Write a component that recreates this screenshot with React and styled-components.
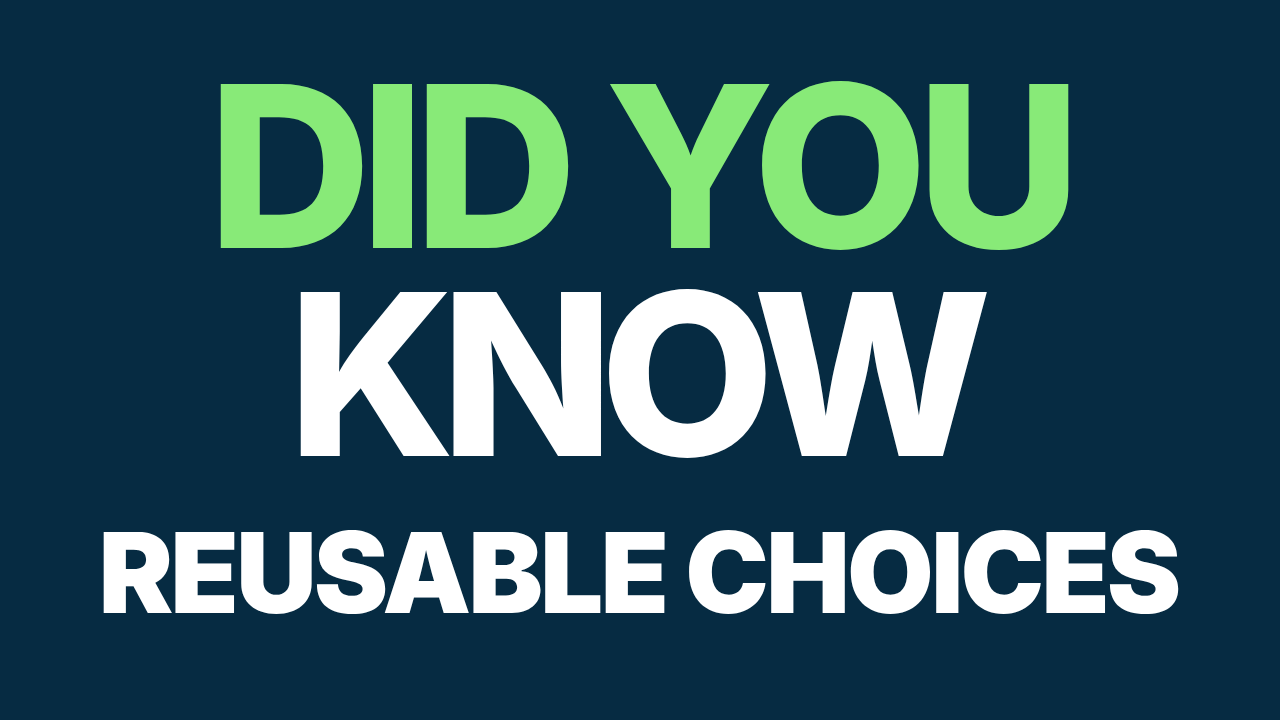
import React from 'react';
import styled, { createGlobalStyle } from 'styled-components';

const GlobalStyle = createGlobalStyle`
  html, body {
    margin: 0;
    padding: 0;
    background: #062b42;
  }
`;

const Screen = styled.div`
  width: 1280px;
  height: 720px;
  background: #062b42;
  display: flex;
  flex-direction: column;
  align-items: center;
  overflow: hidden;
  font-family: Inter, 'Noto Sans', sans-serif;
`;

// trim: margin-right that pulls the word back to centre after negative letter-spacing
const Line = styled.div`
  color: ${p => p.color || '#ffffff'};
  font-size: ${p => p.size}px;
  font-weight: ${p => p.weight || 800};
  line-height: ${p => p.lh}px;
  letter-spacing: ${p => p.spacing}px;
  margin-top: ${p => p.top}px;
  margin-right: ${p => p.trim || 0}px;
  white-space: nowrap;
`;

export default function App() {
  return (
    <>
      <GlobalStyle />
      <Screen>
        <Line color="#88ea78" size={226} lh={200} spacing={-11} trim={2} top={66}>
          DID YOU
        </Line>
        <Line size={226} lh={200} spacing={-14} trim={14} top={8}>
          KNOW
        </Line>
        <Line size={112} lh={112} weight={900} spacing={-3} trim={3} top={42}>
          REUSABLE CHOICES
        </Line>
      </Screen>
    </>
  );
}
